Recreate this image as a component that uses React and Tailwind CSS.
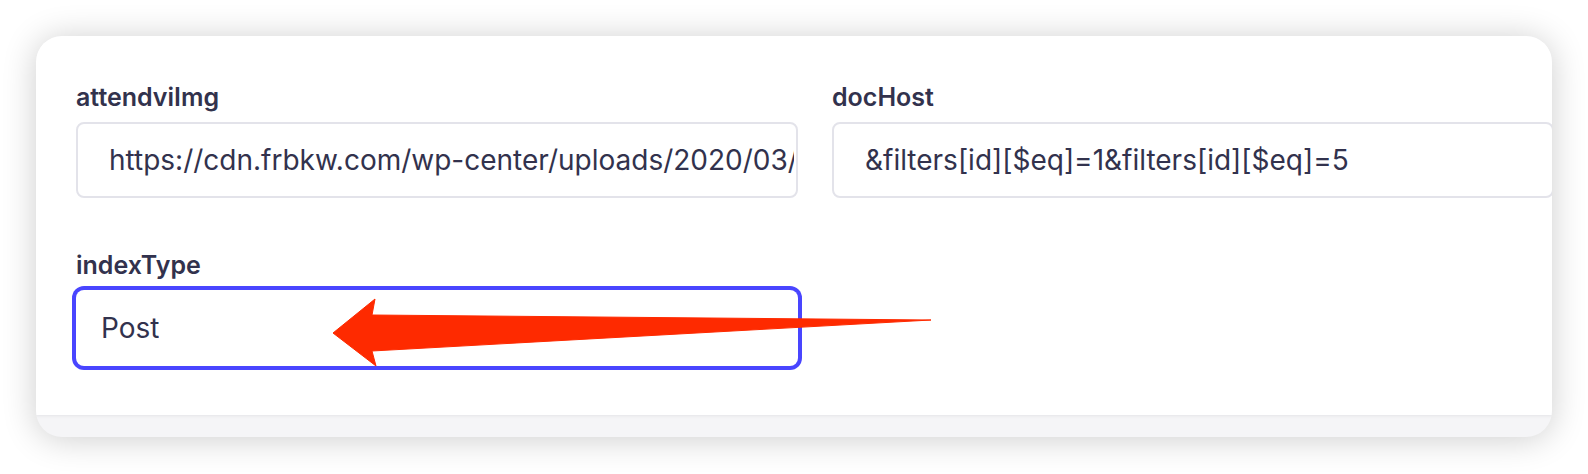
const fieldLabel = 'text-[25px] leading-[28px] font-semibold text-[#32324d]'
const inputBox = 'mt-[11px] flex h-[76px] items-center overflow-hidden whitespace-nowrap rounded-[8px] bg-white text-[28px] text-[#32324d]'

const Field = ({ label, value, focused }) => (
  <div className="flex flex-col">
    <span className={fieldLabel}>{label}</span>
    <div
      className={`${inputBox} ${focused ? 'pl-[24px] border border-transparent ring-4 ring-[#4945ff]' : 'pl-[31px] pr-[2px] border-2 border-[#e3e3ea]'}`}
    >
      <span className="overflow-hidden">{value}</span>
    </div>
  </div>
)

export default function App() {
  return (
    <div className="relative h-[474px] w-[1588px] overflow-hidden bg-white font-['Inter','Noto_Sans',sans-serif]">
      <div className="ml-[36px] mt-[36px] flex h-[401px] w-[1516px] flex-col overflow-hidden rounded-[26px] bg-[#f5f5f7] shadow-[0_2px_34px_rgba(0,0,0,0.2)]">
        <div className="h-[379px] bg-white px-[40px] pt-[47px] shadow-[0_1px_3px_rgba(33,33,52,0.08)]">
          <div className="grid grid-cols-[722px_722px] gap-x-[34px] gap-y-[53px]">
            <Field label="attendviImg" value="https://cdn.frbkw.com/wp-center/uploads/2020/03/" />
            <Field label="docHost" value="&filters[id][$eq]=1&filters[id][$eq]=5" />
            <Field label="indexType" value="Post" focused />
          </div>
        </div>
      </div>

      {/* annotation arrow */}
      <svg className="pointer-events-none absolute inset-0" width="1588" height="474" viewBox="0 0 1588 474">
        <polygon
          points="333,333 375,299 372,315 931,320 372,351 376,366"
          fill="#fe2a00"
          stroke="#fe2a00"
          strokeWidth="1"
          strokeLinejoin="round"
        />
      </svg>
    </div>
  )
}
